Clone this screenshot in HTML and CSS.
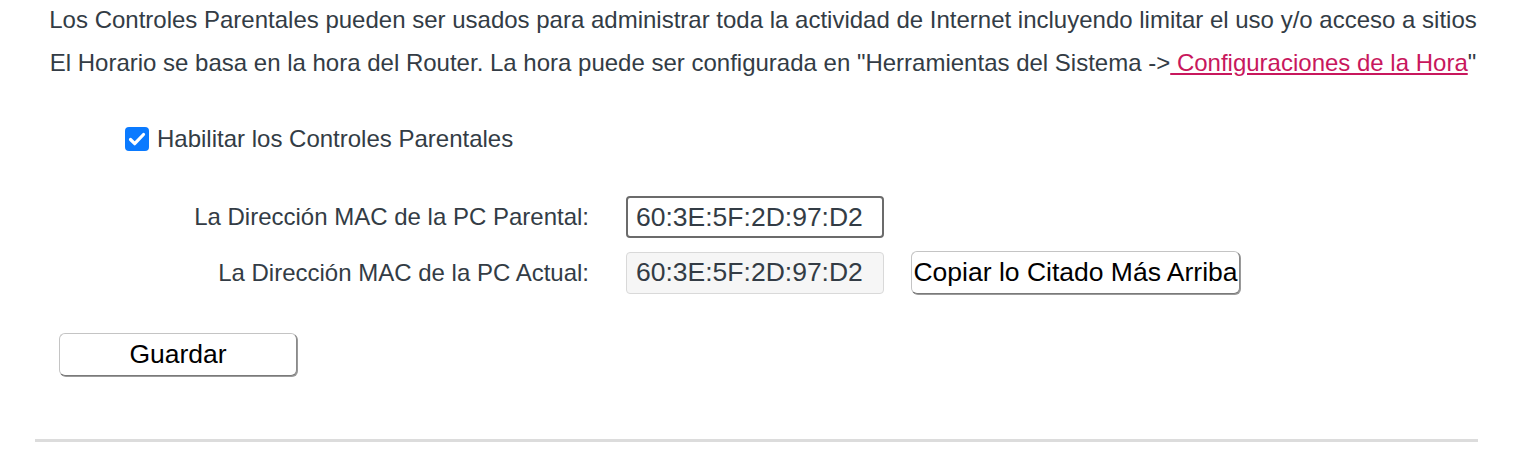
FILE: index.html
```html
<!DOCTYPE html>
<html lang="es">
<head>
<meta charset="utf-8">
<title>Controles Parentales</title>
<link rel="stylesheet" href="styles.css">
</head>
<body>
<div class="page">
  <div class="intro">
    <p>Los Controles Parentales pueden ser usados para administrar toda la actividad de Internet incluyendo limitar el uso y/o acceso a sitios</p>
    <p>El Horario se basa en la hora del Router. La hora puede ser configurada en "Herramientas del Sistema -&gt;<a href="#" class="link"> Configuraciones de la Hora</a>"</p>
  </div>

  <label class="enable">
    <span class="cb"><svg viewBox="0 0 24 24" width="24" height="24"><path d="M5.5 12.5l4.2 4.2L18.5 7.5" fill="none" stroke="#fff" stroke-width="3.2" stroke-linecap="round" stroke-linejoin="round"/></svg></span>
    <span class="enable-text">Habilitar los Controles Parentales</span>
  </label>

  <div class="form">
    <div class="lbl">La Dirección MAC de la PC Parental:</div>
    <div class="field editable">60:3E:5F:2D:97:D2</div>
    <div></div>
    <div class="lbl">La Dirección MAC de la PC Actual:</div>
    <div class="field readonly">60:3E:5F:2D:97:D2</div>
    <button class="btn copy">Copiar lo Citado Más Arriba</button>
  </div>

  <div class="actions">
    <button class="btn save">Guardar</button>
  </div>

  <div class="rule"></div>
</div>
</body>
</html>
```

FILE: styles.css
```css
html, body {
  margin: 0;
  padding: 0;
  background: #fff;
}

.page {
  font-family: "Liberation Sans", Arial, Helvetica, sans-serif;
  color: #333c45;
  width: 1538px;
}

.intro {
  display: flex;
  flex-direction: column;
  gap: 3px;
  padding-right: 12px;
}

.intro p {
  margin: 0;
  text-align: center;
  font-size: 24px;
  line-height: 40px;
  white-space: nowrap;
}

.link {
  color: #c8175d;
  text-decoration: underline;
}

.enable {
  display: flex;
  align-items: center;
  gap: 8px;
  margin-top: 41px;
  padding-left: 125px;
  height: 30px;
}

.cb {
  width: 24px;
  height: 24px;
  border-radius: 4px;
  background: #0a7aff;
  display: flex;
  align-items: center;
  justify-content: center;
}

.cb svg {
  display: block;
}

.enable-text {
  font-size: 24px;
}

.form {
  display: grid;
  grid-template-columns: 589px 258px auto;
  column-gap: 37px;
  row-gap: 13px;
  margin-top: 42px;
  align-items: center;
}

.form .copy {
  margin-left: -10px;
  justify-self: start;
}

.lbl {
  text-align: right;
  font-size: 24px;
  white-space: nowrap;
}

.field {
  box-sizing: border-box;
  height: 42px;
  padding: 0 8px;
  display: flex;
  align-items: center;
  font-size: 26.5px;
  border-radius: 4px;
  white-space: nowrap;
}

.editable {
  border: 2px solid #6b6b6b;
  background: #fff;
}

.readonly {
  border: 1px solid #d9d9d9;
  background: #f6f6f6;
  padding-left: 9px;
}

.btn {
  font-family: "Liberation Sans", Arial, Helvetica, sans-serif;
  color: #000;
  background: #fff;
  border: 1px solid #c4c4c4;
  border-right-color: #8a8a8a;
  border-bottom-color: #7a7a7a;
  border-radius: 6px;
  box-shadow: 1px 1px 0 #9a9a9a;
  box-sizing: border-box;
  height: 43px;
  padding: 0;
  font-size: 26.5px;
  white-space: nowrap;
}

.copy {
  width: 329px;
}

.actions {
  margin-top: 39px;
  padding-left: 59px;
}

.save {
  width: 238px;
}

.rule {
  margin: 63px 0 0 35px;
  width: 1443px;
  height: 3px;
  background: #dcdcdc;
}
```
